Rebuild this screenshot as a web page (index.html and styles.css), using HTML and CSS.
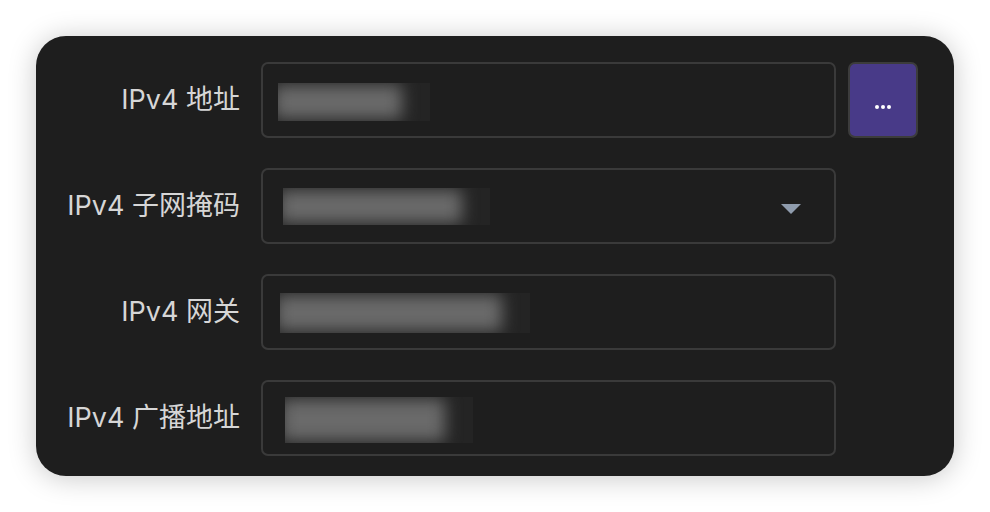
FILE: index.html
```html
<!DOCTYPE html>
<html lang="zh-CN">
<head>
    <meta charset="UTF-8">
    <title>IPv4 设置</title>
    <link rel="stylesheet" href="styles.css">
</head>
<body>
    <div class="card">
        <label class="label">IPv4 地址</label>
        <div class="field"><span class="mask mask-1"><span></span></span></div>
        <button class="more-btn" title="更多"><span></span><span></span><span></span></button>

        <label class="label">IPv4 子网掩码</label>
        <div class="field select"><span class="mask mask-2"><span></span></span><i class="caret"></i></div>
        <div></div>

        <label class="label">IPv4 网关</label>
        <div class="field"><span class="mask mask-3"><span></span></span></div>
        <div></div>

        <label class="label">IPv4 广播地址</label>
        <div class="field"><span class="mask mask-4"><span></span></span></div>
        <div></div>
    </div>
</body>
</html>
```

FILE: styles.css
```css
* {
    box-sizing: border-box;
    margin: 0;
    padding: 0;
}

body {
    background: #ffffff;
    padding: 36px;
    font-family: "Inter", "Noto Sans CJK SC", sans-serif;
}

.card {
    width: 918px;
    height: 440px;
    background: #1e1e1e;
    border-radius: 30px;
    box-shadow: 0 2px 28px rgba(0, 0, 0, 0.22);
    padding: 26px 36px 20px 21px;
    display: grid;
    grid-template-columns: 204px 575px 82px;
    grid-template-rows: 76px 76px 76px 76px;
    row-gap: 30px;
    align-items: center;
}

.label {
    padding-right: 21px;
    margin-top: -6px;
    text-align: right;
    color: #d6d6d6;
    font-size: 27px;
    white-space: nowrap;
}

.field {
    position: relative;
    height: 76px;
    border: 2px solid #3a3a3a;
    border-radius: 7px;
    overflow: hidden;
}

/* blurred, redacted value */
.mask {
    position: absolute;
    overflow: hidden;
    background: #242424;
}

.mask span {
    position: absolute;
    left: -4px;
    top: 2px;
    right: 28px;
    bottom: 2px;
    background: #6a6a6a;
    filter: blur(8px);
}

.mask-1 { left: 15px; top: 19px; width: 152px; height: 38px; }
.mask-2 { left: 20px; top: 18px; width: 207px; height: 37px; }
.mask-3 { left: 17px; top: 17px; width: 250px; height: 40px; }
.mask-4 { left: 22px; top: 15px; width: 188px; height: 46px; }

.caret {
    position: absolute;
    right: 33px;
    top: 34px;
    border-left: 10px solid transparent;
    border-right: 10px solid transparent;
    border-top: 10px solid #8f9cad;
}

.more-btn {
    margin-left: 12px;
    width: 70px;
    height: 76px;
    background: #483a88;
    border: 2px solid #3c3c3c;
    border-radius: 7px;
    display: flex;
    justify-content: center;
    align-items: center;
    gap: 2px;
    padding-top: 14px;
    cursor: pointer;
}

.more-btn span {
    width: 4px;
    height: 4px;
    border-radius: 50%;
    background: #ffffff;
}
```
